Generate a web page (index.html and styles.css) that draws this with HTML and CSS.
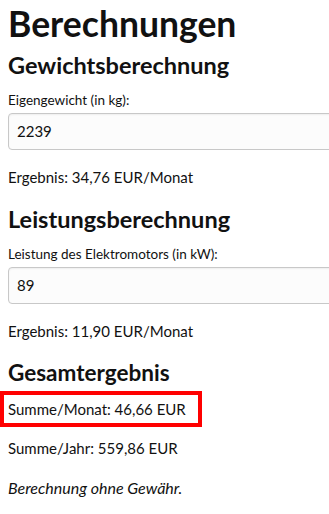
FILE: index.html
```html
<!DOCTYPE html>
<html lang="de">
<head>
<meta charset="utf-8">
<link rel="stylesheet" href="styles.css">
</head>
<body>
<h1 class="title">Berechnungen</h1>
<section class="block">
  <h2 class="sub">Gewichtsberechnung</h2>
  <label class="lbl">Eigengewicht (in kg):</label>
  <div class="field">2239</div>
  <p class="res">Ergebnis: 34,76 EUR/Monat</p>
</section>
<section class="block">
  <h2 class="sub">Leistungsberechnung</h2>
  <label class="lbl">Leistung des Elektromotors (in kW):</label>
  <div class="field">89</div>
  <p class="res">Ergebnis: 11,90 EUR/Monat</p>
</section>
<section class="block">
  <h2 class="sub">Gesamtergebnis</h2>
  <p class="res hl">Summe/Monat: 46,66 EUR</p>
  <p class="res year">Summe/Jahr: 559,86 EUR</p>
  <p class="res note">Berechnung ohne Gewähr.</p>
</section>
</body>
</html>
```
FILE: styles.css
```css
html, body { margin: 0; padding: 0; }
body {
  font-family: "Lato", "Open Sans", sans-serif;
  color: #111;
  padding: 2px 0 0 8px;
  overflow: hidden;
  width: 321px;
}
.title {
  font-size: 35.5px;
  font-weight: 700;
  margin: 0;
  line-height: 44px;
}
.sub {
  font-size: 23.5px;
  font-weight: 700;
  margin: 0;
  line-height: 30px;
}
.block:first-of-type .sub { margin-top: 4px; }
.block:last-of-type .sub { font-size: 22.5px; }
.lbl {
  display: block;
  font-size: 13.5px;
  line-height: 18px;
  margin-top: 11px;
}
.field {
  margin-top: 4px;
  width: 340px;
  height: 37px;
  box-sizing: border-box;
  border: 1px solid #c8c8c8;
  border-radius: 4px;
  background: #fcfcfc;
  box-shadow: inset 0 1px 2px rgba(0,0,0,0.06);
  padding: 0 8px;
  font-size: 15px;
  line-height: 35px;
}
.res {
  font-size: 15px;
  line-height: 20px;
  margin: 17px 0 0;
}
.block + .block .sub { margin-top: 17px; }
.hl {
  margin: 2.5px 0 0 -8px;
  padding: 4px 12px 4px 4px;
  border: 4px solid #f00;
  display: inline-block;
}
.year { margin-top: 11px; }
.note { font-style: italic; font-size: 16px; margin-top: 20px; }
```
